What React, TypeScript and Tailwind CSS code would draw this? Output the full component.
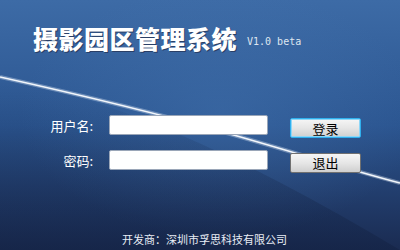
import React from 'react';

const cjk = { fontFamily: '"Noto Sans CJK SC", "Noto Sans", sans-serif' };

const Field = ({ label, children }: { label: string; children: React.ReactNode }) => (
  <div className="flex items-center h-5">
    <span className="w-[93px] text-right text-[13px] leading-none text-white">{label}</span>
    <input
      className="ml-4 w-[159px] h-5 bg-white border border-[#9aa6b8] rounded-[2px] outline-none text-[12px] px-1"
      type={label.startsWith('密') ? 'password' : 'text'}
    />
    {children}
  </div>
);

const Btn = ({ text, focus }: { text: string; focus?: boolean }) => (
  <button
    className={`ml-[22px] w-[71px] h-[20px] rounded-[2px] border text-[13px] leading-none text-black bg-gradient-to-b from-[#f6f6f6] via-[#e6e6e6] to-[#cfcfcf] ${
      focus ? 'border-[#2fb0ee] shadow-[inset_0_0_0_1px_#8fd6f7]' : 'border-[#707070]'
    }`}
  >
    {text}
  </button>
);

export default function App() {
  return (
    <div
      className="relative w-[400px] h-[250px] overflow-hidden bg-gradient-to-b from-[#3d6ba6] via-[#2b5590] to-[#1a2b51]"
      style={cjk}
    >
      <svg className="absolute inset-0" width="400" height="250" viewBox="0 0 400 250">
        <defs>
          <radialGradient id="glow" cx="0.55" cy="0.45" r="0.5">
            <stop offset="0" stopColor="#4a7cb8" stopOpacity="0.35" />
            <stop offset="1" stopColor="#4a7cb8" stopOpacity="0" />
          </radialGradient>
          <linearGradient id="shade" x1="0" y1="0" x2="0" y2="1">
            <stop offset="0" stopColor="#0f1c3a" stopOpacity="0" />
            <stop offset="1" stopColor="#0f1c3a" stopOpacity="0.35" />
          </linearGradient>
        </defs>
        <rect width="400" height="250" fill="url(#glow)" />
        <path d="M0 80 Q 150 100 400 250 L 0 250 Z" fill="url(#shade)" />
        <path
          d="M0 77 C 90 97 170 117 230 134 S 340 167 400 183"
          stroke="#dce8f6"
          strokeOpacity="0.35"
          strokeWidth="4"
          fill="none"
        />
        <path
          d="M0 77 C 90 97 170 117 230 134 S 340 167 400 183"
          stroke="#f2f6fb"
          strokeWidth="1.6"
          fill="none"
        />
      </svg>

      <div className="relative flex flex-col h-full">
        <div className="flex items-end pt-[24px] pl-[33px]">
          <span className="text-[25px] leading-[28px] font-black text-white tracking-[0.5px] [text-shadow:1px_1px_0_#2a3f66]">
            摄影园区管理系统
          </span>
          <span
            className="ml-[10px] mb-[5px] text-[10px] leading-none text-[#dfe6f0]"
            style={{ fontFamily: '"DejaVu Sans Mono", "Liberation Mono", monospace' }}
          >
            V1.0 beta
          </span>
        </div>

        <div className="flex flex-col gap-[15px] mt-[63px]">
          <Field label="用户名:">
            <div className="mt-[3px]">
              <Btn text="登录" focus />
            </div>
          </Field>
          <Field label="密码:">
            <div className="mt-[2px]">
              <Btn text="退出" />
            </div>
          </Field>
        </div>

        <div className="mt-auto pb-[4px] text-center text-[11px] leading-[14px] text-[#e8edf5] pl-[9px]">
          开发商：深圳市孚思科技有限公司
        </div>
      </div>
    </div>
  );
}
